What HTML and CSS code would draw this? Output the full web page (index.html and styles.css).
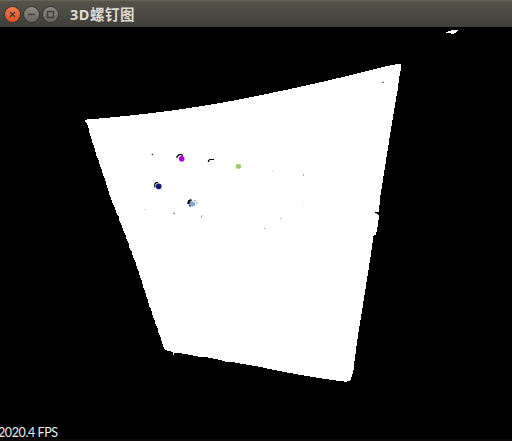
FILE: index.html
```html
<!DOCTYPE html>
<html lang="zh-CN">
<head>
<meta charset="utf-8">
<title>3D螺钉图</title>
<link rel="stylesheet" href="styles.css">
</head>
<body>
<main class="window">
  <header class="titlebar">
    <div class="controls">
      <span class="control close"><svg viewBox="0 0 15 15"><path d="M5 5l5 5M10 5l-5 5"/></svg></span>
      <span class="control"><svg viewBox="0 0 15 15"><path d="M4 7.5h7"/></svg></span>
      <span class="control"><svg viewBox="0 0 15 15"><path d="M4.5 4.5h6v6h-6z"/></svg></span>
    </div>
    <h1 class="title">3D螺钉图</h1>
  </header>
  <section class="viewport">
    <svg class="cloud" viewBox="0 27 512 414">
      <path class="surface" d="M84.5 121L87 119.5Q165 113.3 230 101.2Q310 86 389 65.6Q396 64 401.5 64L401 69L399 79L397.6 90L395 105L392.5 120L390 135L387.5 151L385 167L382 186L380 198L379 212L376 212.5L379 215L378 225L376 235H373.7L371 254L368 273L365 292L362 311L359 329L356 350L354 365L353.3 372L350 381Q348 382 342 381.3L325 379L305 375.7L284 372L258 366.5L237 363L230 361.5L225 361.6L220 360L205 357L200 357L185 354L175 352.5L173.5 355L173 352L167 350.7L164 348.5L163.3 346L162 342L161.2 341L160.6 337L158.6 333L157.8 329L155.4 324L154.4 320L152.4 315L151.4 310L149.2 306L148.2 301L146.3 296L145 291L143 287L142 281L139.8 276L138.4 271L136.4 266L135.3 261L133 257L131.8 252L129.6 248L128.4 243L126.4 239L125.2 234L123 230L121.4 225L119.6 221L118.4 216L116 212L114.7 207L112.4 203L111 198L109.2 194L108 189L106.2 184L105 179L102.7 174L101.4 169L99.4 164L98.2 159L96.2 155L95 149L92.9 144L91.6 139L89.8 134L88.4 128L87 124L86 122Z"/>
      <path class="surface" d="M445 32L450 31.2L452 30H458L456 33.2L452 34L450 33L446 33Z"/>
      <g class="holes">
        <path d="M177 158V156.500L179 154.700H181.500L183 155.500"/>
        <path d="M208.500 162V160.500L210 159.500H214"/>
        <path d="M154.800 187.500V184L156 182.700H158"/>
        <path class="bold" d="M188 204L189 201L191.500 200M190 206.500L190.500 202"/>
        <path d="M375 212.300L379 213.400"/>
      </g>
      <g class="specks">
        <path d="M151.700 154.500h1.500M382.300 82.300h1.500"/>
        <path class="soft" d="M172.500 213.500h1.500M174.500 212v2.500M201.500 218v-2l1-1M193.500 200.500h2l1.500 2v1.500M303.500 174v2M280 218.300h1.500M264 228.500h1.200"/>
        <path class="faint" d="M144 209.500h2M272.500 170v2M303 205.700h1"/>
      </g>
      <circle cx="181.700" cy="158.800" r="2.800" fill="#aa00de"/>
      <ellipse cx="238.400" cy="166.400" rx="2.700" ry="2.400" fill="#9bcb64"/>
      <circle cx="158.700" cy="186.400" r="2.800" fill="#151970"/>
      <ellipse cx="192.400" cy="203.900" rx="3" ry="2.500" fill="#86a6d4"/>
    </svg>
    <span class="fps">2020.4 FPS</span>
  </section>
</main>
</body>
</html>
```

FILE: styles.css
```css
* { box-sizing: border-box; }
body { margin: 0; background: #000; }
.window {
  width: 512px;
  height: 441px;
  display: flex;
  flex-direction: column;
  overflow: hidden;
}
.titlebar {
  flex: 0 0 27px;
  display: flex;
  align-items: center;
  gap: 12px;
  padding: 0 5px;
  background: linear-gradient(#565349, #3f3e39);
  border-top: 1px solid #676358;
}
.controls { display: flex; gap: 4px; }
.control {
  width: 15px;
  height: 15px;
  border-radius: 50%;
  background: linear-gradient(#8b8981, #67655f);
  box-shadow: 0 0 0 1px #383732;
}
.control.close { background: linear-gradient(#f57b52, #df4b1c); }
.control svg { display: block; width: 15px; height: 15px; }
.control path { fill: none; stroke: #3c3b37; stroke-width: 1.3; }
.title {
  margin: 0;
  color: #dfdbd2;
  font: bold 14.5px/24px "Noto Sans", "Noto Sans CJK SC", sans-serif;
  letter-spacing: 0.5px;
  white-space: nowrap;
}
.viewport {
  position: relative;
  flex: 1;
  background: #000;
  border-bottom: 2px solid #0b0809;
}
.cloud { display: block; width: 512px; height: 414px; margin-bottom: -2px; }
.surface { fill: #fff; shape-rendering: crispEdges; }
.holes path { fill: none; stroke: #000; stroke-width: 1.2; }
.holes .bold { stroke-width: 1.9; }
.specks path { fill: none; stroke: #444; stroke-width: 1.3; }
.specks .soft { stroke: #aaa; stroke-width: 1; }
.specks .faint { stroke: #ddd; stroke-width: 1; }
.fps {
  position: absolute;
  left: -2px;
  bottom: -1px;
  color: #eee;
  font: 12.5px/14px Lato, sans-serif;
  letter-spacing: -0.4px;
  white-space: nowrap;
}
```
